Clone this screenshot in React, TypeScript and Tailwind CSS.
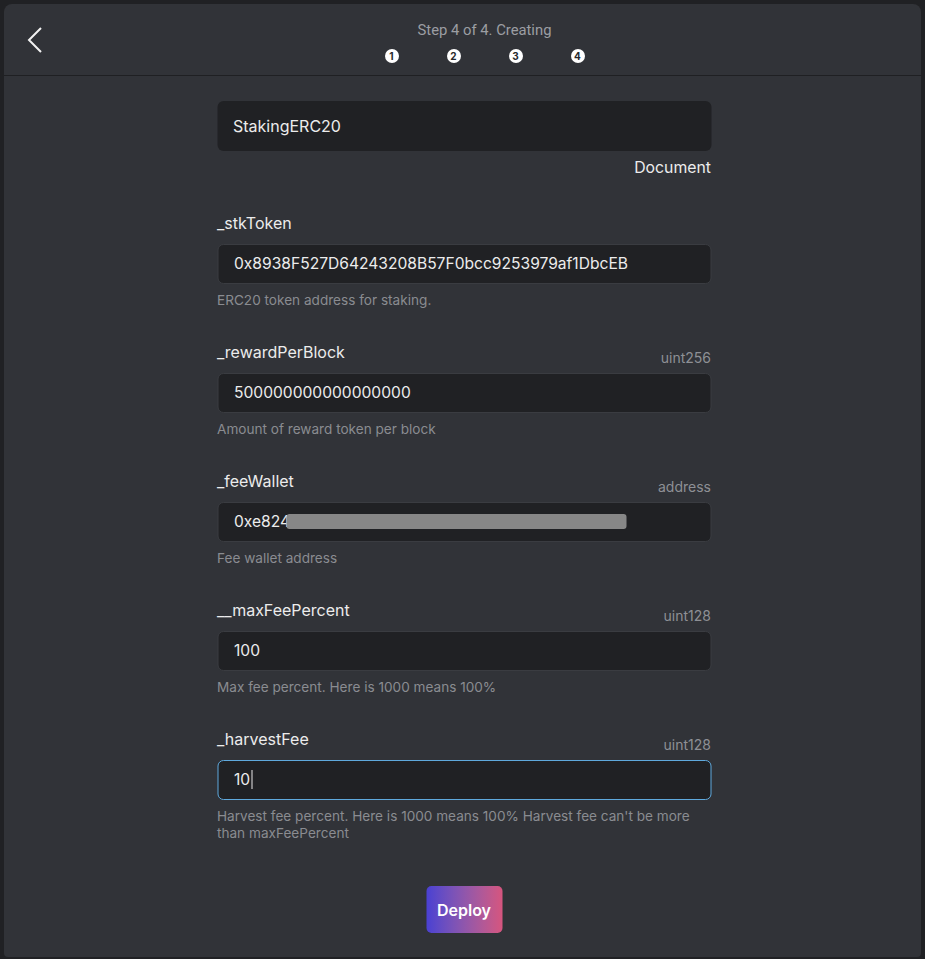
import React from "react";

type Field = {
  name: string;
  type?: string;
  value: React.ReactNode;
  hint: string;
  focused?: boolean;
};

const fields: Field[] = [
  {
    name: "_stkToken",
    value: "0x8938F527D64243208B57F0bcc9253979af1DbcEB",
    hint: "ERC20 token address for staking.",
  },
  {
    name: "_rewardPerBlock",
    type: "uint256",
    value: "500000000000000000",
    hint: "Amount of reward token per block",
  },
  {
    name: "_feeWallet",
    type: "address",
    value: (
      <span className="flex items-center">
        0xe824
        <span className="inline-block w-[340px] h-[15px] -ml-[4px] rounded-[3px] bg-[#878787]" />
      </span>
    ),
    hint: "Fee wallet address",
  },
  {
    name: "__maxFeePercent",
    type: "uint128",
    value: "100",
    hint: "Max fee percent. Here is 1000 means 100%",
  },
  {
    name: "_harvestFee",
    type: "uint128",
    value: (
      <span className="flex items-center">
        10
        <span className="inline-block w-px h-[19px] bg-[#e8e8e8] ml-px" />
      </span>
    ),
    hint: "Harvest fee percent. Here is 1000 means 100% Harvest fee can't be more than maxFeePercent",
    focused: true,
  },
];

function Steps() {
  return (
    <div className="flex gap-[48px] mt-[10px]">
      {[1, 2, 3, 4].map(n => (
        <div
          key={n}
          className="w-[14px] h-[14px] rounded-full bg-white text-[#26282c] text-[10px] font-bold flex items-center justify-center leading-none"
        >
          {n}
        </div>
      ))}
    </div>
  );
}

function FieldBlock({ f, first }: { f: Field; first: boolean }) {
  return (
    <div className={first ? "mt-[35px]" : "mt-[33px]"}>
      <div className="flex items-end justify-between">
        <span className="text-[16px] leading-[20px] pb-px text-[#ececec]">{f.name}</span>
        {f.type && (
          <span className="text-[14px] leading-[14px] text-[#8e9095] translate-y-[2px]">{f.type}</span>
        )}
      </div>
      <div
        className={
          "mt-[10px] h-10 rounded-[6px] bg-[#202124] border px-[16px] flex items-center text-[15.6px] text-[#ececec] " +
          (f.focused ? "border-[#5fa9dd]" : "border-[#3a3c41]")
        }
      >
        {f.value}
      </div>
      <p className="mt-[8px] text-[13.6px] leading-[17px] text-[#8a8c91] pr-[8px]">{f.hint}</p>
    </div>
  );
}

export default function App() {
  return (
    <div
      className="h-[959px] bg-[#202124] px-[4px] pt-[4px] pb-[2px] flex flex-col"
      style={{ fontFamily: "Inter, 'Noto Sans', sans-serif" }}
    >
      <div className="flex-1 bg-[#313338] rounded-t-[8px] rounded-b-[4px] flex flex-col">
        <header className="flex border-b border-[#1f2023] h-[72px]">
          <div className="w-[44px] shrink-0 pt-[23px]">
            <svg width="18" height="28" viewBox="0 0 18 28" className="ml-[22px] overflow-visible">
              <path d="M15 1 L3 13 L15 25" fill="none" stroke="#f2f2f2" strokeWidth="2" />
            </svg>
          </div>
          <div className="flex-1 flex flex-col items-center pt-[17px]">
            <div
              className="text-[14.8px] leading-[18px] text-[#9c9ea3]"
              style={{ fontFamily: "Roboto, 'Liberation Sans', sans-serif" }}
            >
              Step 4 of 4. Creating
            </div>
            <Steps />
          </div>
        </header>

        <main className="w-[494px] mx-auto translate-x-[1.5px] pb-[24px]">
          <div className="mt-[25px] h-[50px] rounded-[6px] bg-[#202124] px-[16px] flex items-center text-[16px] text-[#ececec]">
            StakingERC20
          </div>
          <div className="mt-[7px] text-right text-[15.8px] leading-[20px] text-[#ececec]">Document</div>

          {fields.map((f, i) => (
            <FieldBlock key={f.name} f={f} first={i === 0} />
          ))}

          <div className="flex justify-center mt-[44px]">
            <button className="w-[76px] h-[47px] rounded-[5px] bg-gradient-to-r from-[#4a40d2] to-[#d6557e] text-white text-[16px] font-semibold">
              Deploy
            </button>
          </div>
        </main>
      </div>
    </div>
  );
}
